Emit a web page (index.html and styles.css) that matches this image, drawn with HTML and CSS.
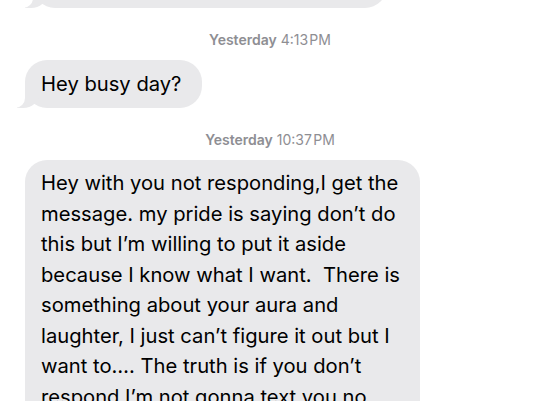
FILE: index.html
```html
<!DOCTYPE html>
<html lang="en">
<head>
    <meta charset="UTF-8">
    <meta name="viewport" content="width=device-width, initial-scale=1.0">
    <title>Messages</title>
    <link rel="stylesheet" href="styles.css">
</head>
<body>
    <div class="thread">
        <div class="bubble bubble-cut" aria-hidden="true"></div>

        <div class="stamp"><b>Yesterday</b> 4:13&#8202;PM</div>
        <div class="bubble">Hey busy day?</div>

        <div class="stamp"><b>Yesterday</b> 10:37&#8202;PM</div>
        <div class="bubble bubble-long">Hey with you not responding,I get the message. my pride is saying don’t do this but I’m willing to put it aside because I know what I want.&nbsp; There is something about your aura and laughter, I just can’t figure it out but I want to…. The truth is if you don’t respond I’m not gonna text you no more</div>
    </div>
</body>
</html>
```

FILE: styles.css
```css
body {
    margin: 0;
    padding: 0;
    background-color: #fff;
    font-family: Inter, "Liberation Sans", sans-serif;
    overflow: hidden;
}

.thread {
    display: flex;
    flex-direction: column;
    align-items: flex-start;
    padding-left: 25px;
}

.stamp {
    align-self: stretch;
    text-align: center;
    padding: 24px 25px 12px 0;
    font-size: 14px;
    line-height: 16px;
    color: #8e8e93;
}

.stamp b {
    font-weight: 600;
}

.bubble {
    position: relative;
    background-color: #e9e9eb;
    color: #000;
    border-radius: 22px;
    padding: 9px 21px 9px 16px;
    font-size: 20.2px;
    line-height: 30px;
}

/* little tail at the bottom left */
.bubble::before {
    content: "";
    position: absolute;
    left: -8px;
    bottom: 0;
    width: 22px;
    height: 22px;
    background-color: #e9e9eb;
    border-bottom-right-radius: 16px 14px;
}

.bubble::after {
    content: "";
    position: absolute;
    left: -10px;
    bottom: 0;
    width: 10px;
    height: 22px;
    background-color: #fff;
    border-bottom-right-radius: 10px;
}

.bubble-cut {
    width: 354px;
    height: 60px;
    padding: 0;
    margin-top: -52px;
    margin-left: 8px;
}

.bubble-long {
    width: 363px;
    padding: 8px 16px;
    line-height: 30.5px;
}

.bubble-long::before,
.bubble-long::after {
    display: none;
}
```
